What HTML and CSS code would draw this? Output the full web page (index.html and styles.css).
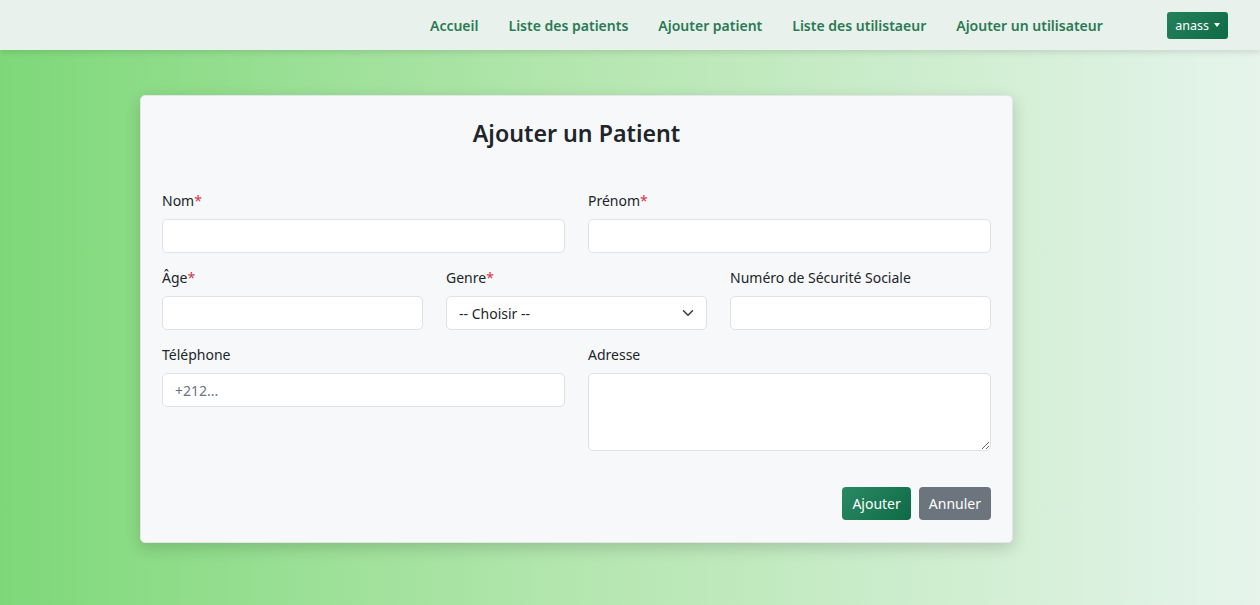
FILE: index.html
```html
<!DOCTYPE html>
<html lang="fr">
<head>
<meta charset="utf-8">
<title>Ajouter un Patient</title>
<link rel="stylesheet" href="styles.css">
</head>
<body>
<nav class="navbar">
  <ul class="nav-links">
    <li><a href="#">Accueil</a></li>
    <li><a href="#">Liste des patients</a></li>
    <li><a href="#">Ajouter patient</a></li>
    <li><a href="#">Liste des utilistaeur</a></li>
    <li><a href="#">Ajouter un utilisateur</a></li>
  </ul>
  <button class="user-btn">anass <span class="caret"></span></button>
</nav>
<main class="page">
  <section class="card">
    <h3 class="card-title">Ajouter un Patient</h3>
    <form class="form">
      <div class="row two">
        <div class="field">
          <label>Nom<span class="req">*</span></label>
          <input type="text" class="control">
        </div>
        <div class="field">
          <label>Prénom<span class="req">*</span></label>
          <input type="text" class="control">
        </div>
      </div>
      <div class="row three">
        <div class="field">
          <label>Âge<span class="req">*</span></label>
          <input type="text" class="control">
        </div>
        <div class="field">
          <label>Genre<span class="req">*</span></label>
          <div class="select control">
            <span>-- Choisir --</span>
            <svg width="12" height="12" viewBox="0 0 16 16"><path d="M2 5l6 6 6-6" fill="none" stroke="#343a40" stroke-width="2" stroke-linecap="round" stroke-linejoin="round"/></svg>
          </div>
        </div>
        <div class="field">
          <label>Numéro de Sécurité Sociale</label>
          <input type="text" class="control">
        </div>
      </div>
      <div class="row two">
        <div class="field">
          <label>Téléphone</label>
          <input type="text" class="control" placeholder="+212...">
        </div>
        <div class="field">
          <label>Adresse</label>
          <textarea class="control area" rows="3"></textarea>
        </div>
      </div>
      <div class="actions">
        <button type="button" class="btn btn-green">Ajouter</button>
        <button type="button" class="btn btn-grey">Annuler</button>
      </div>
    </form>
  </section>
</main>
</body>
</html>
```
FILE: styles.css
```css
* { box-sizing: border-box; }
html, body { margin: 0; height: 100%; }
body {
  font-family: "Noto Sans", "Open Sans", sans-serif;
  font-size: 14px;
  color: #212529;
  background: linear-gradient(to right, #7ed879 0%, #b3e6ae 45%, #e6f4ec 100%);
  min-height: 605px;
}
.navbar {
  height: 50px;
  background: #e9f1ec;
  display: flex;
  align-items: center;
  justify-content: flex-end;
  padding-right: 32px;
  box-shadow: 0 2px 6px rgba(0,0,0,0.12);
  position: relative;
  z-index: 2;
}
.nav-links {
  list-style: none;
  margin: 0 50px 0 0;
  padding: 0;
  display: flex;
}
.nav-links a {
  display: block;
  padding: 8px 15px;
  color: #2a7a55;
  text-decoration: none;
  font-weight: 600;
  font-size: 14px;
}
.nav-links li:last-child a { padding-right: 14.5px; }
.user-btn {
  height: 27px;
  padding: 0 8px;
  border: none;
  border-radius: 3px;
  background: linear-gradient(135deg, #23825a, #0f6a47);
  color: #fff;
  font-family: inherit;
  font-size: 12.5px;
  display: flex;
  align-items: center;
  gap: 5px;
}
.caret {
  width: 0; height: 0;
  border-left: 3.5px solid transparent;
  border-right: 3.5px solid transparent;
  border-top: 4px solid #fff;
}
.page {
  padding: 45px 0 0 140px;
}
.card {
  width: 873px;
  background: #f7f8fa;
  border: 1px solid #e3e6e8;
  border-radius: 5px;
  box-shadow: 0 5px 16px rgba(0,0,0,0.16);
  padding: 22px 21px 22px;
}
.card-title {
  margin: 0 0 24px;
  text-align: center;
  font-size: 23.2px;
  font-weight: 600;
  line-height: 30px;
  color: #212529;
}
.form { padding-top: 18px; }
.row {
  display: grid;
  gap: 23px;
  margin-bottom: 14px;
}
.row.two { grid-template-columns: 1fr 1fr; }
.row.three { grid-template-columns: 1fr 1fr 1fr; }
.field { display: flex; flex-direction: column; }
.field label {
  line-height: 21px;
  margin-bottom: 8px;
  color: #212529;
}
.req { color: #dc3545; }
.control {
  height: 34px;
  border: 1px solid #dee2e6;
  border-radius: 5px;
  background: #fff;
  padding: 0 12px;
  font-family: inherit;
  font-size: 14px;
  color: #212529;
  outline: none;
}
.control::placeholder { color: #6c757d; }
.select {
  display: flex;
  align-items: center;
  justify-content: space-between;
  padding-right: 12px;
}
.area {
  height: 78px;
  resize: vertical;
  padding: 6px 12px;
}
.actions {
  display: flex;
  justify-content: flex-end;
  gap: 8px;
  margin-top: 36px;
}
.btn {
  height: 33px;
  padding: 0 10px;
  border: none;
  border-radius: 4px;
  color: #fff;
  font-family: inherit;
  font-size: 14px;
}
.btn-green { background: linear-gradient(135deg, #2a8a64, #0e6a46); }
.btn-grey { background: #6c757d; }
```
